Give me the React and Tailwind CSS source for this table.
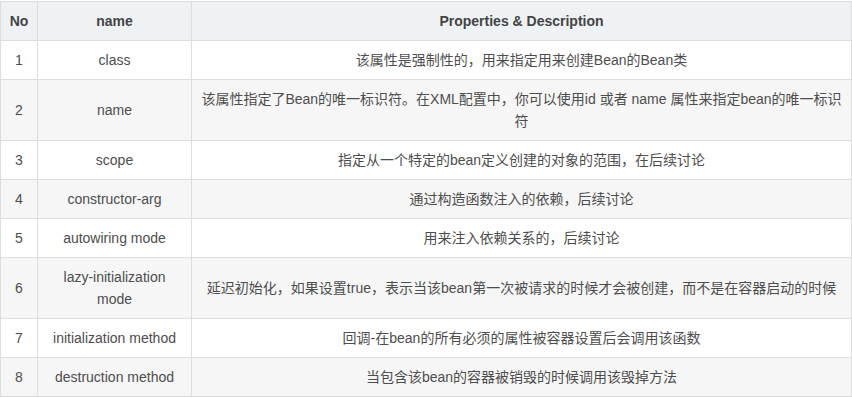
import React from "react";

const rows = [
  { no: 1, name: "class", desc: "该属性是强制性的，用来指定用来创建Bean的Bean类" },
  {
    no: 2,
    name: "name",
    desc: "该属性指定了Bean的唯一标识符。在XML配置中，你可以使用id 或者 name 属性来指定bean的唯一标识符",
  },
  { no: 3, name: "scope", desc: "指定从一个特定的bean定义创建的对象的范围，在后续讨论" },
  { no: 4, name: "constructor-arg", desc: "通过构造函数注入的依赖，后续讨论" },
  { no: 5, name: "autowiring mode", desc: "用来注入依赖关系的，后续讨论" },
  {
    no: 6,
    name: "lazy-initialization mode",
    desc: "延迟初始化，如果设置true，表示当该bean第一次被请求的时候才会被创建，而不是在容器启动的时候",
  },
  { no: 7, name: "initialization method", desc: "回调-在bean的所有必须的属性被容器设置后会调用该函数" },
  { no: 8, name: "destruction method", desc: "当包含该bean的容器被销毁的时候调用该毁掉方法" },
];

export default function App() {
  return (
    <div
      className="w-[852px] h-[398px] bg-white pt-px"
      style={{ fontFamily: '"Liberation Sans", Arial, "Noto Sans CJK SC", sans-serif' }}
    >
      <table className="w-[852px] border-collapse table-fixed text-[14px] leading-[22px] text-[#4d4d4d]">
        <colgroup>
          <col className="w-[37px]" />
          <col className="w-[154px]" />
          <col />
        </colgroup>
        <thead>
          <tr className="bg-[#eef2f5]">
            <th className="border border-[#ddd] px-2 py-2 font-bold text-[#444] text-center">No</th>
            <th className="border border-[#ddd] px-2 py-2 font-bold text-[#444] text-center">name</th>
            <th className="border border-[#ddd] px-2 py-2 font-bold text-[#444] text-center">
              Properties &amp; Description
            </th>
          </tr>
        </thead>
        <tbody>
          {rows.map((r, i) => (
            <tr key={r.no} className={i % 2 === 0 ? "bg-white" : "bg-[#f6f6f6]"}>
              <td className="border border-[#ddd] px-2 py-2 text-center align-middle">{r.no}</td>
              <td className="border border-[#ddd] px-2 py-2 text-center align-middle">{r.name}</td>
              <td className="border border-[#ddd] px-2 py-2 text-center align-middle">{r.desc}</td>
            </tr>
          ))}
        </tbody>
      </table>
    </div>
  );
}
